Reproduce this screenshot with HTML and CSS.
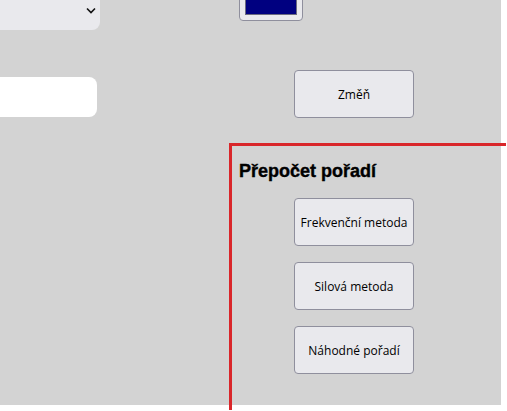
FILE: index.html
```html
<!DOCTYPE html>
<html lang="cs">
<head>
<meta charset="utf-8">
<title>Přepočet pořadí</title>
<link rel="stylesheet" href="styles.css">
</head>
<body>
<div class="panel">
  <div class="left">
    <div class="select"><span class="chev"><svg width="10" height="7" viewBox="0 0 10 7"><path d="M1 1.5 L5 5.5 L9 1.5" fill="none" stroke="#111" stroke-width="1.6"/></svg></span></div>
    <div class="input"></div>
  </div>
  <div class="right">
    <div class="swatch"><div class="swatch-color"></div></div>
    <button class="btn btn-change">Změň</button>
    <section class="recalc">
      <h2 class="title">Přepočet pořadí</h2>
      <div class="btns">
        <button class="btn">Frekvenční metoda</button>
        <button class="btn">Silová metoda</button>
        <button class="btn">Náhodné pořadí</button>
      </div>
    </section>
  </div>
</div>
</body>
</html>
```
FILE: styles.css
```css
html, body {
  margin: 0;
  padding: 0;
  background: #ffffff;
}
body {
  min-height: 411px;
}
.panel {
  width: 501px;
  height: 405px;
  background: #d3d3d3;
  display: flex;
  align-items: flex-start;
  font-family: "Open Sans", "Liberation Sans", sans-serif;
}
.left {
  width: 229px;
  flex-shrink: 0;
  display: flex;
  flex-direction: column;
}
.select {
  width: 100px;
  height: 30px;
  background: #e9e9ed;
  border-radius: 0 0 8px 0;
  position: relative;
}
.chev {
  position: absolute;
  left: 86px;
  top: 7px;
  line-height: 0;
}
.input {
  margin-top: 47px;
  width: 97px;
  height: 40px;
  background: #ffffff;
  border-radius: 0 8px 8px 0;
}
.right {
  display: block;
  width: 277px;
  flex-shrink: 0;
}
.swatch {
  margin-left: 10px;
  margin-top: -18px;
  width: 64px;
  height: 39px;
  box-sizing: border-box;
  border: 1px solid #8f8f9d;
  border-radius: 4px;
  background: #e9e9ed;
  padding: 5px;
}
.swatch-color {
  width: 100%;
  height: 100%;
  background: #000080;
  box-sizing: border-box;
  border: 1px solid #6b6b80;
}
.btn {
  display: block;
  width: 120px;
  height: 48px;
  box-sizing: border-box;
  background: #e9e9ed;
  border: 1px solid #8f8f9d;
  border-radius: 4px;
  font-family: "Open Sans", "Liberation Sans", sans-serif;
  font-size: 12px;
  color: #000;
  padding: 0;
}
.btn-change {
  margin-left: 65px;
  margin-top: 49px;
}
.recalc {
  margin-top: 25px;
  width: 277px;
  height: 267px;
  box-sizing: border-box;
  border-top: 3px solid #d9262a;
  border-left: 3px solid #d9262a;
  padding: 14px 0 0 7px;
}
.title {
  margin: 0;
  font-family: "Liberation Sans", Arial, sans-serif;
  font-weight: bold;
  font-size: 18px;
  line-height: 22px;
  color: #000;
  -webkit-text-stroke: 0.4px #000;
}
.btns {
  display: flex;
  flex-direction: column;
  gap: 16px;
  margin-top: 16px;
  padding-left: 55px;
}
```
